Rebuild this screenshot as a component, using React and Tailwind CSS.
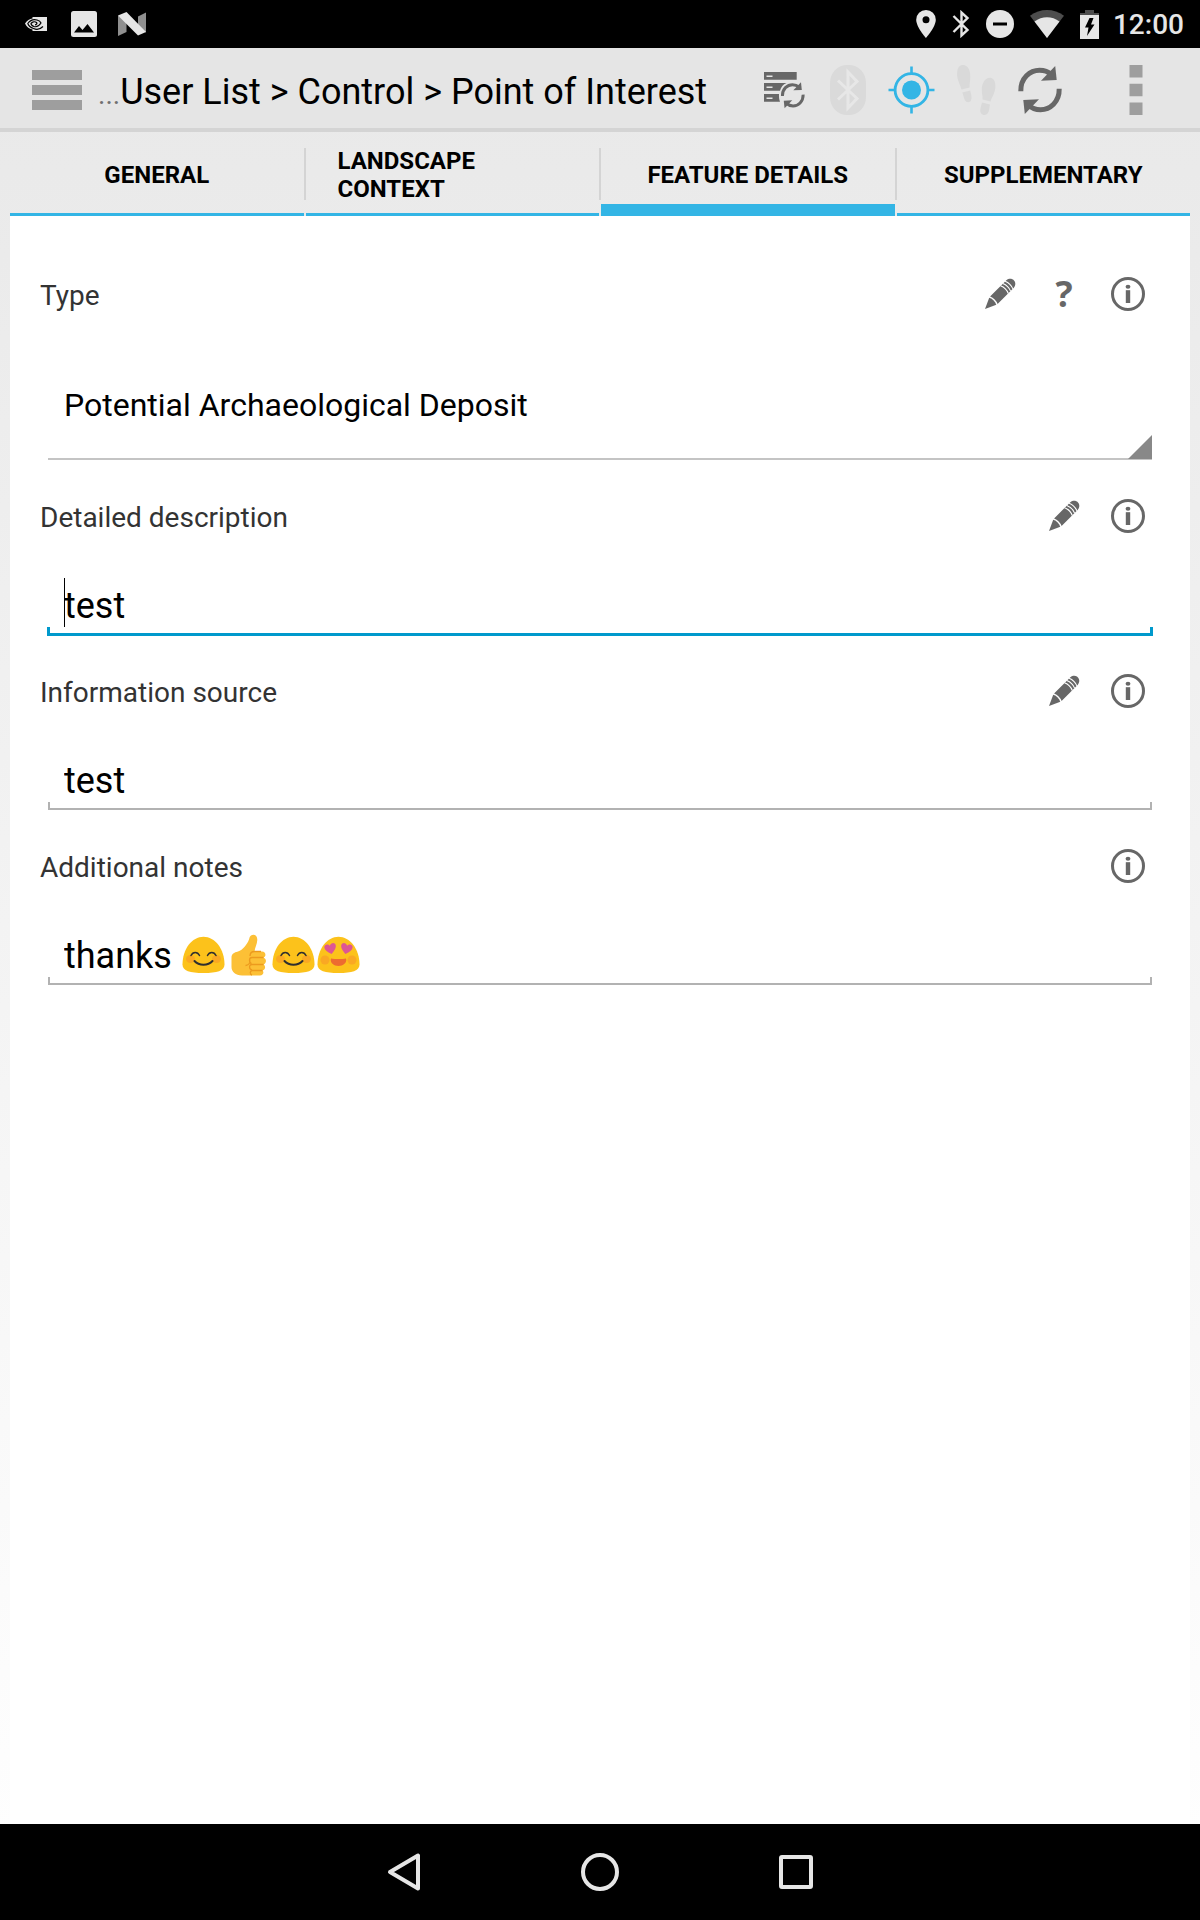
import React from "react";

function NvidiaIcon() {
  return (
    <svg width="22" height="14" viewBox="0 0 22 14" aria-hidden="true">
      <path d="M7.5 0H22V14H7.5V12.5C4 12 1.5 9.500 0 6.500C2 3.500 4.500 2 7.500 1.500Z" fill="#e6e6e6" />
      <path
        d="M18 9.500C15.500 12 12 13 8.500 11.500C5.500 10.500 3.500 8.500 2.800 6.500C5 3.500 8.500 2 12 3C14 3.600 15.500 4.800 16 6C14 9 11.500 10.300 9 9.500C7 8.800 6 7.500 6 6.500C7.500 4.800 10 4.300 11.500 5.500C12.200 6.200 12 7.500 10 7.800"
        fill="none"
        stroke="#000"
        strokeWidth="1.2"
      />
    </svg>
  );
}

function PictureIcon() {
  return (
    <svg width="26" height="26" viewBox="0 0 26 26" aria-hidden="true">
      <rect width="26" height="26" rx="2.500" fill="#e6e6e6" />
      <path d="M3 21.500L8 15L11.500 19L16.500 13L23 21.500Z" fill="#000" />
    </svg>
  );
}

function NougatIcon() {
  return (
    <svg width="28" height="24" viewBox="0 0 28 24" aria-hidden="true">
      <path d="M0 3.500L8.500 8V20L0 24ZM28 0.500V20.500L20 16V4.500Z" fill="#8f8f8f" />
      <path d="M0 3.500L8.500 0L28 20L20 23.500Z" fill="#e6e6e6" />
    </svg>
  );
}

function PinIcon() {
  return (
    <svg width="20" height="28" viewBox="0 0 20 28" aria-hidden="true">
      <path
        d="M10 0A9.800 9.800 0 0 0 0.200 9.800C0.200 17 10 28 10 28S19.800 17 19.800 9.800A9.800 9.800 0 0 0 10 0ZM10 13.300A3.500 3.500 0 1 1 10 6.300A3.500 3.500 0 0 1 10 13.300Z"
        fill="#e6e6e6"
      />
    </svg>
  );
}

function StatusBluetoothIcon() {
  return (
    <svg width="18" height="28" viewBox="0 0 18 28" aria-hidden="true">
      <path d="M1.500 6L15.500 20L9.500 25.500V2.500L15.500 8L1.500 22" fill="none" stroke="#e6e6e6" strokeWidth="2.400" />
    </svg>
  );
}

function DoNotDisturbIcon() {
  return (
    <svg width="28" height="28" viewBox="0 0 28 28" aria-hidden="true">
      <circle cx="14" cy="14" r="14" fill="#e6e6e6" />
      <rect x="7" y="12.500" width="14" height="3" fill="#000" />
    </svg>
  );
}

function WifiIcon() {
  return (
    <svg width="34" height="28" viewBox="0 0 34 28" aria-hidden="true">
      <path d="M17 28L0 5.800C10 -1.900 24 -1.900 34 5.800Z" fill="#4d4d4d" />
      <path d="M17 28L4.500 11.500C12 5.800 22 5.800 29.500 11.500Z" fill="#e6e6e6" />
    </svg>
  );
}

function BatteryIcon() {
  return (
    <svg width="19" height="29" viewBox="0 0 19 29" aria-hidden="true">
      <path d="M5 0H14V3H19V6H0V3H5Z" fill="#4d4d4d" />
      <rect y="5" width="19" height="24" fill="#e6e6e6" />
      <path d="M9.500 8H13.500L11 14.500H14.500L7 26L8.500 17.500H5Z" fill="#000" />
    </svg>
  );
}

function StatusBar() {
  return (
    <header className="flex h-12 items-center justify-between bg-black pl-[25px] pr-4 text-[#e6e6e6]">
      <div className="flex items-center gap-6">
        <NvidiaIcon />
        <div className="flex items-center gap-[21px]">
          <PictureIcon />
          <NougatIcon />
        </div>
      </div>
      <div className="flex items-center gap-4">
        <PinIcon />
        <StatusBluetoothIcon />
        <DoNotDisturbIcon />
        <WifiIcon />
        <BatteryIcon />
        <span className="-ml-0.5 pt-0.5 text-[28px] leading-8 font-medium">12:00</span>
      </div>
    </header>
  );
}

function RefreshShape({ width }) {
  return (
    <g>
      <path d="M12.800 33.200C12.500 20 22 12.300 31.500 12.300C36 12.300 40 13.500 43 16.500" fill="none" stroke="#676767" strokeWidth={width} />
      <path d="M47.200 8L48.700 22L33 22.700Z" fill="#676767" />
      <path d="M51.200 30.800C51.500 44 42 51.700 32.500 51.700C28 51.700 24 50.500 21 47.500" fill="none" stroke="#676767" strokeWidth={width} />
      <path d="M16.800 56L15.300 42L31 41.300Z" fill="#676767" />
    </g>
  );
}

function SyncListIcon() {
  return (
    <svg width="64" height="64" viewBox="0 0 64 64" aria-hidden="true">
      <path d="M12 14H44.700V21.800H12ZM12 25H34.500C31 26.500 29 29 28 32.800H12ZM12 36H27C26.800 39 27.200 41.500 28 43.800H12Z" fill="#676767" />
      <path d="M14.500 18.200H20.500M14.500 29.200H20.500M14.500 40.200H20.500" stroke="#e6e6e6" strokeWidth="1.600" />
      <g transform="translate(23.500 20) scale(0.540)">
        <RefreshShape width="5.500" />
      </g>
    </svg>
  );
}

function BluetoothIcon() {
  return (
    <svg width="64" height="64" viewBox="0 0 64 64" aria-hidden="true">
      <rect x="14" y="7" width="36" height="50" rx="17" ry="18" fill="#dadada" />
      <path d="M22 22.500L41 40.500L32 50V14L41 23.500L22 41.500" fill="none" stroke="#e7e7e7" strokeWidth="3" />
    </svg>
  );
}

function TargetIcon() {
  return (
    <svg width="64" height="64" viewBox="0 0 64 64" aria-hidden="true">
      <circle cx="31.500" cy="32" r="16.400" fill="none" stroke="#33b5e5" strokeWidth="2.800" />
      <circle cx="31.500" cy="32" r="9.500" fill="#33b5e5" />
      <path d="M31.500 8.500V17M31.500 47V55.500M8.500 32H16M47 32H54.500" stroke="#33b5e5" strokeWidth="2.600" />
    </svg>
  );
}

function FootprintsIcon() {
  return (
    <svg width="64" height="64" viewBox="0 0 64 64" aria-hidden="true">
      <g fill="#d9d9d9">
        <path d="M18.500 7C23.500 6.500 26.500 12 26.300 19C26.200 23.500 25.300 26 25.600 29.500L17.500 31.500C16.500 27.500 13.300 22 13.100 17C12.900 11.500 14.500 7.300 18.500 7Z" />
        <path d="M18.300 34.500L26.200 32.500C27 36 28.300 39.500 27 42.500C25.500 45 22.300 44.700 20.800 42C19.700 40 19.500 37 18.300 34.500Z" />
        <path d="M46.500 19.700C50.500 20.300 51.800 25 51.300 30C50.800 35.500 47.500 39.500 46.500 43.500L38.500 41.500C39 38 37.500 35 37.800 30.500C38.200 24.500 41.500 19 46.500 19.700Z" />
        <path d="M38 44.500L46 46.500C45.300 49 45.500 51.500 44.500 54C43 57.500 39 58 37 55.200C35.300 52.500 37.200 48 38 44.500Z" />
      </g>
    </svg>
  );
}

function RefreshIcon() {
  return (
    <svg width="64" height="64" viewBox="0 0 64 64" aria-hidden="true">
      <RefreshShape width="5" />
    </svg>
  );
}

const actions = [
  { label: "Sync list", Icon: SyncListIcon },
  { label: "Bluetooth", Icon: BluetoothIcon },
  { label: "Locate", Icon: TargetIcon },
  { label: "Track", Icon: FootprintsIcon },
  { label: "Refresh", Icon: RefreshIcon },
];

function ActionBar() {
  return (
    <div className="flex h-[84px] items-center border-b-4 border-[#d4d4d4] bg-[#e5e5e5] pt-1 pl-8 pr-8">
      <button type="button" aria-label="Menu" className="flex w-[50px] shrink-0 flex-col gap-[5px]">
        <span className="h-2.5 bg-[#9e9e9e]" />
        <span className="h-2.5 bg-[#9e9e9e]" />
        <span className="h-2.5 bg-[#9e9e9e]" />
      </button>
      <h1 className="ml-4 flex-1 truncate pt-1.5 text-[36px] leading-[44px] text-black">
        <span className="text-[28px] text-[#707070]">...</span>User List &gt; Control &gt; Point of Interest
      </h1>
      <div className="flex shrink-0 items-center">
        {actions.map(({ label, Icon }) => (
          <button key={label} type="button" aria-label={label}>
            <Icon />
          </button>
        ))}
        <button type="button" aria-label="More options" className="ml-8 flex w-16 justify-center">
          <svg width="14" height="50" viewBox="0 0 14 50" aria-hidden="true">
            <path d="M0.500 0H13.500V12.500H0.500ZM0.500 18.700H13.500V31.200H0.500ZM0.500 37.400H13.500V50H0.500Z" fill="#9e9e9e" />
          </svg>
        </button>
      </div>
    </div>
  );
}

const tabs = ["General", "Landscape Context", "Feature Details", "Supplementary"];

function Tabs({ active }) {
  return (
    <div role="tablist" className="mx-2.5 flex h-[84px]">
      {tabs.map((tab, i) => (
        <React.Fragment key={tab}>
          {i > 0 && <span className="mt-4 h-[52px] w-0.5 shrink-0 bg-[#d4d4d4]" />}
          <button
            type="button"
            role="tab"
            aria-selected={tab === active}
            className={
              tab === active
                ? "flex flex-1 basis-0 flex-col items-center border-b-[12px] border-[#33b5e5] px-8"
                : "flex flex-1 basis-0 flex-col items-center border-b-[3px] border-[#33b5e5] px-8"
            }
          >
            <span className="flex h-[86px] shrink-0 items-center text-left text-[24px] leading-7 font-bold text-black uppercase">
              {tab}
            </span>
          </button>
        </React.Fragment>
      ))}
    </div>
  );
}

function PencilIcon() {
  return (
    <svg width="64" height="64" viewBox="0 0 64 64" aria-hidden="true">
      <g transform="translate(17 47) rotate(-45)">
        <path d="M0 0L11 -5Q13.500 0 11 5Z" fill="#676767" />
        <path d="M12.500 -5.300H35.500C42.500 -4.500 42.500 4.500 35.500 5.300H12.500Q14.800 0 12.500 -5.300Z" fill="#676767" />
        <path d="M27.500 -5.500Q30 0 27.500 5.500M30.700 -5.500Q33.200 0 30.700 5.500M33.900 -5.500Q36.400 0 33.900 5.500" fill="none" stroke="#fff" strokeWidth="1.100" />
      </g>
    </svg>
  );
}

function InfoIcon() {
  return (
    <svg width="64" height="64" viewBox="0 0 64 64" aria-hidden="true">
      <circle cx="32" cy="32" r="15.500" fill="none" stroke="#676767" strokeWidth="3" />
      <ellipse cx="32" cy="24.800" rx="2.400" ry="2" fill="#676767" />
      <rect x="29.800" y="28.200" width="4.400" height="12.800" fill="#676767" />
    </svg>
  );
}

function FieldHeader({ id, label, edit, help }) {
  return (
    <div className="flex h-16 items-center">
      <label htmlFor={id} className="flex-1 pt-1 text-[28px] leading-8 text-[#333333]">
        {label}
      </label>
      {edit && (
        <button type="button" aria-label={"Edit " + label}>
          <PencilIcon />
        </button>
      )}
      {help && (
        <button
          type="button"
          aria-label={"Help for " + label}
          className="w-16 text-center font-['Open_Sans',sans-serif] text-[36px] leading-[64px] font-bold text-[#676767]"
        >
          ?
        </button>
      )}
      <button type="button" aria-label={"Information about " + label}>
        <InfoIcon />
      </button>
    </div>
  );
}

function SelectField() {
  return (
    <section>
      <FieldHeader id="type" label="Type" edit help />
      <div className="relative mx-2 my-6">
        <select
          id="type"
          className="block h-[110px] w-full appearance-none border-b-2 border-[#c4c4c4] bg-transparent pt-0.5 pl-4 text-[32px] text-black outline-none"
        >
          <option>Potential Archaeological Deposit</option>
        </select>
        <svg className="pointer-events-none absolute right-0 bottom-px" width="24" height="24" viewBox="0 0 24 24" aria-hidden="true">
          <path d="M24 0V24H0Z" fill="#888" />
        </svg>
      </div>
    </section>
  );
}

function TextField({ id, label, value, edit, focused, children }) {
  return (
    <section>
      <FieldHeader id={id} label={label} edit={edit} />
      <div className="relative mx-2 mt-[30px] flex h-[53px] items-center pl-4">
        {focused && <span className="absolute top-0 left-4 h-[49px] w-px bg-black" />}
        <input
          id={id}
          type="text"
          defaultValue={value}
          className={
            children
              ? "field-sizing-content h-[53px] bg-transparent pt-0.5 text-[36px] text-black outline-none"
              : "h-[53px] w-full bg-transparent pt-0.5 text-[36px] text-black outline-none"
          }
        />
        {children}
      </div>
      {focused ? (
        <div className="mx-[7px] -mt-1 mb-[23px] h-[9px] border-x-[3px] border-b-[3px] border-[#0099cc]" />
      ) : (
        <div className="mx-2 -mt-1 mb-6 h-2 border-x-2 border-b-2 border-[#b2b2b2]" />
      )}
    </section>
  );
}

const blob = "M22.500 4.700C34 4.700 43.500 17 43.500 32.500C43.500 39 36 41 22.500 41S1.500 39 1.500 32.500C1.500 17 11 4.700 22.500 4.700Z";

function SmileEmoji() {
  return (
    <svg className="shrink-0" width="45" height="45" viewBox="0 0 45 45" role="img" aria-label="Smiling face">
      <path d={blob} fill="#fcc21b" />
      <ellipse cx="9.500" cy="27" rx="4.500" ry="4" fill="#f79329" opacity="0.550" />
      <ellipse cx="35.500" cy="27" rx="4.500" ry="4" fill="#f79329" opacity="0.550" />
      <path d="M10 23.500C12 19.500 16.500 19.500 18.500 23.500M26.500 23.500C28.500 19.500 33 19.500 35 23.500" fill="none" stroke="#2f2f2f" strokeWidth="1.500" strokeLinecap="round" />
      <path d="M13.500 29C18 34 27 34 31.500 29" fill="none" stroke="#2f2f2f" strokeWidth="2" strokeLinecap="round" />
    </svg>
  );
}

function ThumbEmoji() {
  return (
    <svg className="shrink-0" width="45" height="45" viewBox="0 0 45 45" role="img" aria-label="Thumbs up">
      <path
        d="M25 3.500C28 1.700 31.500 3.500 31.300 8C31.100 12 29 15.500 28.500 19.500H36C40 19.500 40.500 24.500 37.500 25.500C41 27 40.500 31.500 37.500 32.500C40 34 39.500 37.500 36.500 38.500C38.500 40.500 37 43.500 34 43.500H16C9.500 43.500 5.500 39.500 5.500 35V25.500C5.500 22 8 20.500 12 19.500C17 18 21 12.500 23 7.500C23.500 5.500 23.800 4.300 25 3.500Z"
        fill="#fcc036"
      />
      <path d="M24 24C24 20.500 26 19.500 28.500 19.500H35M37.500 25.500H26C22.500 25.500 23 31 25.500 31.500M37.500 32.500H26C22.500 32.500 23 37.500 26 38M36.500 38.500H26C23.500 39 24 42.500 26 43M24 28.500C24 31 22.500 33.500 19.500 33.500" fill="none" stroke="#ec9a1e" strokeWidth="1.300" />
    </svg>
  );
}

function HeartEyesEmoji() {
  const heart = "M0 5.500C-4 2.500 -5.800 0.500 -5.800 -2C-5.800 -5.300 -1.500 -5.800 0 -2.800C1.500 -5.800 5.800 -5.300 5.800 -2C5.800 0.500 4 2.500 0 5.500Z";
  return (
    <svg className="shrink-0" width="45" height="45" viewBox="0 0 45 45" role="img" aria-label="Smiling face with heart eyes">
      <path d={blob} fill="#fcc21b" />
      <ellipse cx="9" cy="28" rx="4.500" ry="4.500" fill="#f79329" opacity="0.550" />
      <ellipse cx="36" cy="28" rx="4.500" ry="4.500" fill="#f79329" opacity="0.550" />
      <path d={heart} transform="translate(14.500 16.500) rotate(-12)" fill="#dd5693" />
      <path d={heart} transform="translate(30.500 16.500) rotate(12)" fill="#dd5693" />
      <path d="M15 26.500C19 27.300 26 27.300 30 26.500C31.500 30.500 27 34 22.500 34S13.500 30.500 15 26.500Z" fill="#ed6c30" />
    </svg>
  );
}

function NavBar() {
  return (
    <nav className="flex h-24 justify-center bg-black">
      <button type="button" aria-label="Back" className="flex w-[196px] items-center justify-center">
        <svg width="36" height="40" viewBox="0 0 36 40" aria-hidden="true">
          <path d="M32 3.500V36.500L4 20Z" fill="none" stroke="#e6e6e6" strokeWidth="4" strokeLinejoin="round" />
        </svg>
      </button>
      <button type="button" aria-label="Home" className="flex w-[196px] items-center justify-center">
        <span className="size-[38px] rounded-full border-4 border-[#e6e6e6]" />
      </button>
      <button type="button" aria-label="Recent apps" className="flex w-[196px] items-center justify-center">
        <span className="size-[34px] rounded-[3px] border-4 border-[#e6e6e6]" />
      </button>
    </nav>
  );
}

export default function App() {
  return (
    <div className="flex min-h-screen flex-col bg-linear-to-b from-[#e8e8e8] to-white font-[Roboto,sans-serif]">
      <StatusBar />
      <ActionBar />
      <Tabs active="Feature Details" />
      <main className="mx-2.5 flex-1 bg-white px-[30px] pt-[46px]">
        <SelectField />
        <TextField id="description" label="Detailed description" value="test" edit focused />
        <TextField id="source" label="Information source" value="test" edit />
        <TextField id="notes" label="Additional notes" value="thanks ">
          <SmileEmoji />
          <ThumbEmoji />
          <SmileEmoji />
          <HeartEyesEmoji />
        </TextField>
      </main>
      <NavBar />
    </div>
  );
}
